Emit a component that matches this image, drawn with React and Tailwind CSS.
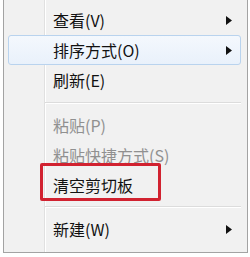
import React from 'react'

const font = { fontFamily: '"Noto Sans CJK SC", "Noto Sans", sans-serif' }

function Arrow() {
  return (
    <svg width="6" height="9" viewBox="0 0 6 9" className="shrink-0">
      <path d="M0 0 L6 4.5 L0 9 Z" fill="#111" />
    </svg>
  )
}

function Item({ label, arrow, disabled, active }) {
  return (
    <div className="h-[30px] flex items-stretch">
      <div
        className={`flex-1 flex items-center ml-[4px] mr-[6px] rounded-[3px] border ${
          active
            ? 'border-[#b9d3ee] bg-gradient-to-b from-[#f4f8fd] to-[#e9f1fb]'
            : 'border-transparent'
        }`}
      >
        <div className="w-[36px] shrink-0" />
        <span
          className={`flex-1 pl-[8px] text-[16px] leading-none ${
            disabled ? 'text-[#909090]' : 'text-[#111]'
          }`}
        >
          {label}
        </span>
        <div className="w-[14px] flex items-center">{arrow && <Arrow />}</div>
      </div>
    </div>
  )
}

function Separator({ h }) {
  return (
    <div className={`${h} flex flex-col justify-center pl-[41px] pr-[6px]`}>
      <div className="h-px bg-[#dcdcdc]" />
      <div className="h-px bg-white" />
    </div>
  )
}

export default function App() {
  return (
    <div className="w-[250px] h-[257px] bg-white overflow-hidden" style={font}>
      <div className="relative ml-[3px] w-[245px] h-[253px] bg-[#f1f1f1] border-l border-r border-b border-[#a3a3a3]">
        {/* gutter line */}
        <div className="absolute left-[40px] top-0 bottom-0 w-px bg-[#e0e0e0]" />
        <div className="absolute left-[41px] top-0 bottom-0 w-px bg-white" />

        <div className="relative pt-[5px]">
          <Item label="查看(V)" arrow />
          <Item label="排序方式(O)" arrow active />
          <Item label="刷新(E)" />
          <Separator h="h-[15px]" />
          <Item label="粘贴(P)" disabled />
          <Item label="粘贴快捷方式(S)" disabled />
          <Item label="清空剪切板" />
          <Separator h="h-[14px]" />
          <Item label="新建(W)" arrow />
        </div>

        {/* red annotation box */}
        <div className="absolute left-[36px] top-[163px] w-[121px] h-[38px] border-[3px] border-[#d12230] rounded-[2px]" />
      </div>
    </div>
  )
}
